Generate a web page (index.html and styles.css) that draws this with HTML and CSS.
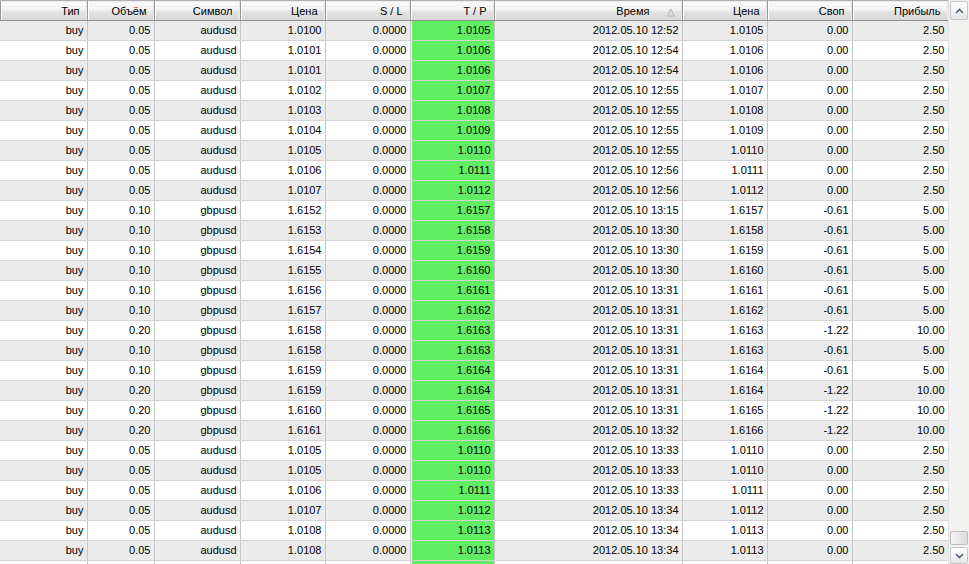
FILE: index.html
```html
<!DOCTYPE html>
<html>
<head>
<meta charset="utf-8">
<link rel="stylesheet" href="styles.css">
</head>
<body>
<div class="frame">
  <div class="grid-wrap">
    <table class="grid">
      <colgroup>
        <col class="c-type"><col class="c-vol"><col class="c-sym"><col class="c-price"><col class="c-sl"><col class="c-tp"><col class="c-time"><col class="c-price2"><col class="c-swap"><col class="c-profit">
      </colgroup>
      <thead>
        <tr>
          <th class="first">Тип</th><th>Объём</th><th>Символ</th><th>Цена</th><th>S / L</th><th>T / P</th><th>Время <span class="sort">△</span></th><th>Цена</th><th>Своп</th><th>Прибыль</th>
        </tr>
      </thead>
      <tbody>
        <tr><td>buy</td><td>0.05</td><td>audusd</td><td>1.0100</td><td>0.0000</td><td class="tp">1.0105</td><td>2012.05.10 12:52</td><td>1.0105</td><td>0.00</td><td>2.50</td></tr>
        <tr><td>buy</td><td>0.05</td><td>audusd</td><td>1.0101</td><td>0.0000</td><td class="tp">1.0106</td><td>2012.05.10 12:54</td><td>1.0106</td><td>0.00</td><td>2.50</td></tr>
        <tr><td>buy</td><td>0.05</td><td>audusd</td><td>1.0101</td><td>0.0000</td><td class="tp">1.0106</td><td>2012.05.10 12:54</td><td>1.0106</td><td>0.00</td><td>2.50</td></tr>
        <tr><td>buy</td><td>0.05</td><td>audusd</td><td>1.0102</td><td>0.0000</td><td class="tp">1.0107</td><td>2012.05.10 12:55</td><td>1.0107</td><td>0.00</td><td>2.50</td></tr>
        <tr><td>buy</td><td>0.05</td><td>audusd</td><td>1.0103</td><td>0.0000</td><td class="tp">1.0108</td><td>2012.05.10 12:55</td><td>1.0108</td><td>0.00</td><td>2.50</td></tr>
        <tr><td>buy</td><td>0.05</td><td>audusd</td><td>1.0104</td><td>0.0000</td><td class="tp">1.0109</td><td>2012.05.10 12:55</td><td>1.0109</td><td>0.00</td><td>2.50</td></tr>
        <tr><td>buy</td><td>0.05</td><td>audusd</td><td>1.0105</td><td>0.0000</td><td class="tp">1.0110</td><td>2012.05.10 12:55</td><td>1.0110</td><td>0.00</td><td>2.50</td></tr>
        <tr><td>buy</td><td>0.05</td><td>audusd</td><td>1.0106</td><td>0.0000</td><td class="tp">1.0111</td><td>2012.05.10 12:56</td><td>1.0111</td><td>0.00</td><td>2.50</td></tr>
        <tr><td>buy</td><td>0.05</td><td>audusd</td><td>1.0107</td><td>0.0000</td><td class="tp">1.0112</td><td>2012.05.10 12:56</td><td>1.0112</td><td>0.00</td><td>2.50</td></tr>
        <tr><td>buy</td><td>0.10</td><td>gbpusd</td><td>1.6152</td><td>0.0000</td><td class="tp">1.6157</td><td>2012.05.10 13:15</td><td>1.6157</td><td>-0.61</td><td>5.00</td></tr>
        <tr><td>buy</td><td>0.10</td><td>gbpusd</td><td>1.6153</td><td>0.0000</td><td class="tp">1.6158</td><td>2012.05.10 13:30</td><td>1.6158</td><td>-0.61</td><td>5.00</td></tr>
        <tr><td>buy</td><td>0.10</td><td>gbpusd</td><td>1.6154</td><td>0.0000</td><td class="tp">1.6159</td><td>2012.05.10 13:30</td><td>1.6159</td><td>-0.61</td><td>5.00</td></tr>
        <tr><td>buy</td><td>0.10</td><td>gbpusd</td><td>1.6155</td><td>0.0000</td><td class="tp">1.6160</td><td>2012.05.10 13:30</td><td>1.6160</td><td>-0.61</td><td>5.00</td></tr>
        <tr><td>buy</td><td>0.10</td><td>gbpusd</td><td>1.6156</td><td>0.0000</td><td class="tp">1.6161</td><td>2012.05.10 13:31</td><td>1.6161</td><td>-0.61</td><td>5.00</td></tr>
        <tr><td>buy</td><td>0.10</td><td>gbpusd</td><td>1.6157</td><td>0.0000</td><td class="tp">1.6162</td><td>2012.05.10 13:31</td><td>1.6162</td><td>-0.61</td><td>5.00</td></tr>
        <tr><td>buy</td><td>0.20</td><td>gbpusd</td><td>1.6158</td><td>0.0000</td><td class="tp">1.6163</td><td>2012.05.10 13:31</td><td>1.6163</td><td>-1.22</td><td>10.00</td></tr>
        <tr><td>buy</td><td>0.10</td><td>gbpusd</td><td>1.6158</td><td>0.0000</td><td class="tp">1.6163</td><td>2012.05.10 13:31</td><td>1.6163</td><td>-0.61</td><td>5.00</td></tr>
        <tr><td>buy</td><td>0.10</td><td>gbpusd</td><td>1.6159</td><td>0.0000</td><td class="tp">1.6164</td><td>2012.05.10 13:31</td><td>1.6164</td><td>-0.61</td><td>5.00</td></tr>
        <tr><td>buy</td><td>0.20</td><td>gbpusd</td><td>1.6159</td><td>0.0000</td><td class="tp">1.6164</td><td>2012.05.10 13:31</td><td>1.6164</td><td>-1.22</td><td>10.00</td></tr>
        <tr><td>buy</td><td>0.20</td><td>gbpusd</td><td>1.6160</td><td>0.0000</td><td class="tp">1.6165</td><td>2012.05.10 13:31</td><td>1.6165</td><td>-1.22</td><td>10.00</td></tr>
        <tr><td>buy</td><td>0.20</td><td>gbpusd</td><td>1.6161</td><td>0.0000</td><td class="tp">1.6166</td><td>2012.05.10 13:32</td><td>1.6166</td><td>-1.22</td><td>10.00</td></tr>
        <tr><td>buy</td><td>0.05</td><td>audusd</td><td>1.0105</td><td>0.0000</td><td class="tp">1.0110</td><td>2012.05.10 13:33</td><td>1.0110</td><td>0.00</td><td>2.50</td></tr>
        <tr><td>buy</td><td>0.05</td><td>audusd</td><td>1.0105</td><td>0.0000</td><td class="tp">1.0110</td><td>2012.05.10 13:33</td><td>1.0110</td><td>0.00</td><td>2.50</td></tr>
        <tr><td>buy</td><td>0.05</td><td>audusd</td><td>1.0106</td><td>0.0000</td><td class="tp">1.0111</td><td>2012.05.10 13:33</td><td>1.0111</td><td>0.00</td><td>2.50</td></tr>
        <tr><td>buy</td><td>0.05</td><td>audusd</td><td>1.0107</td><td>0.0000</td><td class="tp">1.0112</td><td>2012.05.10 13:34</td><td>1.0112</td><td>0.00</td><td>2.50</td></tr>
        <tr><td>buy</td><td>0.05</td><td>audusd</td><td>1.0108</td><td>0.0000</td><td class="tp">1.0113</td><td>2012.05.10 13:34</td><td>1.0113</td><td>0.00</td><td>2.50</td></tr>
        <tr><td>buy</td><td>0.05</td><td>audusd</td><td>1.0108</td><td>0.0000</td><td class="tp">1.0113</td><td>2012.05.10 13:34</td><td>1.0113</td><td>0.00</td><td>2.50</td></tr>
        <tr class="partial"><td></td><td></td><td></td><td></td><td></td><td class="tp"></td><td></td><td></td><td></td><td></td></tr>
      </tbody>
    </table>
  </div>
  <div class="scrollbar">
    <div class="sb-btn sb-up">
      <svg width="9" height="6" viewBox="0 0 9 6"><path d="M1 5 L4.5 1.5 L8 5" fill="none" stroke="#4d6185" stroke-width="1.6"/></svg>
    </div>
    <div class="sb-track">
      <div class="sb-thumb"></div>
    </div>
    <div class="sb-btn sb-down">
      <svg width="9" height="6" viewBox="0 0 9 6"><path d="M1 1 L4.5 4.5 L8 1" fill="none" stroke="#4d6185" stroke-width="1.6"/></svg>
    </div>
  </div>
</div>
</body>
</html>
```

FILE: styles.css
```css
html, body {
  margin: 0;
  padding: 0;
  background: #ffffff;
}

.frame {
  display: flex;
  width: 969px;
  height: 564px;
  overflow: hidden;
  font-family: "Liberation Sans", Arial, sans-serif;
  font-size: 11px;
  color: #000;
}

.grid-wrap {
  width: 948px;
  flex: none;
  overflow: hidden;
}

.grid {
  width: 948px;
  table-layout: fixed;
  border-collapse: collapse;
  border-spacing: 0;
}

.c-type { width: 87px; }
.c-vol { width: 67px; }
.c-sym { width: 86px; }
.c-price { width: 85px; }
.c-sl { width: 85px; }
.c-tp { width: 84px; }
.c-time { width: 188px; }
.c-price2 { width: 85px; }
.c-swap { width: 85px; }
.c-profit { width: 96px; }

.grid th {
  height: 20px;
  padding: 1px 7px 0 0;
  box-sizing: border-box;
  text-align: right;
  font-weight: normal;
  white-space: nowrap;
  background: linear-gradient(#fbfbfb 0%, #f1f1f1 45%, #e2e2e2 55%, #d9d9d9 100%);
  border-top: 1px solid #b0b0b0;
  border-bottom: 1px solid #8f8f8f;
  border-right: 1px solid #9a9a9a;
  box-shadow: inset 1px 0 0 #ffffff, inset -1px 0 0 #e8e8e8;
  line-height: 17px;
}

.grid th.first {
  box-shadow: inset 1px 0 0 #9a9a9a, inset 2px 0 0 #ffffff, inset -1px 0 0 #e8e8e8;
}

.grid th .sort {
  color: #9a9a9a;
  font-size: 10px;
  margin-left: 14px;
}

.grid td {
  height: 19px;
  padding: 0 3px 0 0;
  text-align: right;
  white-space: nowrap;
  border-right: 1px solid #c5c5c5;
  border-bottom: 1px solid #d4d4d4;
  line-height: 19px;
}

.grid tbody tr:nth-child(odd) td {
  background: #ebebeb;
}

.grid tbody tr:nth-child(even) td {
  background: #ffffff;
}

.grid tbody tr td.tp {
  background: #62ee62;
  box-shadow: inset 1px 0 0 #ffffff;
}

.scrollbar {
  width: 21px;
  flex: none;
  display: flex;
  flex-direction: column;
  background: #f2f2f0;
  border-left: 1px solid #e2e2e2;
  box-sizing: border-box;
}

.sb-btn {
  height: 17px;
  flex: none;
  display: flex;
  align-items: center;
  justify-content: center;
  margin: 1px 1px 0 1px;
  background: linear-gradient(#ffffff, #e6e6e6);
  border: 1px solid #c6c6c6;
  border-radius: 2px;
}

.sb-down {
  margin: 0 1px 0 1px;
  height: 15px;
}

.sb-track {
  flex: 1;
  display: flex;
  flex-direction: column;
  justify-content: flex-end;
  padding: 0 1px 2px 1px;
}

.sb-thumb {
  height: 12px;
  background: linear-gradient(90deg, #f4f4f4, #dcdcdc);
  border: 1px solid #bdbdbd;
  border-radius: 2px;
}
```
